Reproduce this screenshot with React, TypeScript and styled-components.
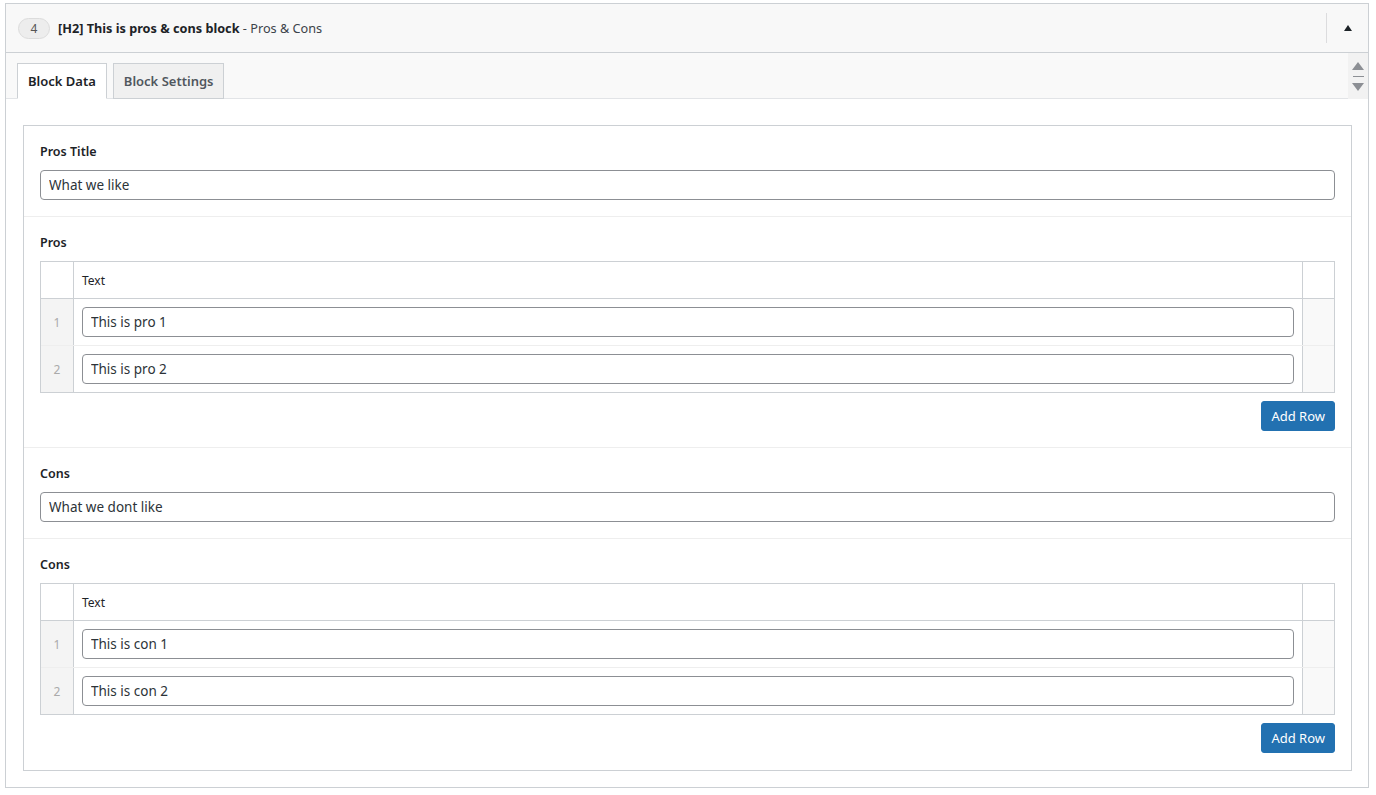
import React from "react";
import styled, { createGlobalStyle } from "styled-components";

const GlobalStyle = createGlobalStyle`
  html, body {
    margin: 0;
    padding: 0;
    background: #fff;
  }
  body {
    font-family: "Noto Sans", "Open Sans", sans-serif;
    font-size: 13px;
    color: #1d2327;
  }
  * {
    box-sizing: border-box;
  }
`;

type Row = { id: number; text: string };

const Page = styled.div`
  padding: 3px 7px 7px 5px;
`;

const Block = styled.div`
  border: 1px solid #ccd0d4;
  background: #fff;
`;

const BlockHeader = styled.div`
  display: flex;
  align-items: center;
  height: 49px;
  padding: 0 0 0 12px;
  background: #f8f8f8;
  border-bottom: 1px solid #ccd0d4;
`;

const Badge = styled.span`
  display: inline-flex;
  align-items: center;
  justify-content: center;
  width: 32px;
  height: 21px;
  border-radius: 11px;
  background: #ededed;
  border: 1px solid #dcdcdc;
  color: #555;
  font-size: 12px;
  margin-right: 8px;
`;

const Title = styled.div`
  flex: 1;
  font-size: 12.7px;
  color: #3c434a;

  & > b {
    font-weight: 700;
    color: #1d2327;
  }
`;

const ToggleBox = styled.div`
  display: flex;
  align-items: center;
  justify-content: center;
  width: 42px;
  height: 30px;
  border-left: 1px solid #dcdcde;
`;

const TabsBar = styled.div`
  display: flex;
  align-items: flex-end;
  height: 46px;
  background: #f9f9f9;
  border-bottom: 1px solid #e2e4e7;
`;

const Tabs = styled.div`
  flex: 1;
  display: flex;
  gap: 6px;
  padding-left: 11px;
  margin-bottom: -1px;
`;

const Tab = styled.div<{ $active?: boolean }>`
  height: 36px;
  padding: 0 10px;
  display: flex;
  align-items: center;
  font-size: 13px;
  font-weight: 600;
  color: ${(p) => (p.$active ? "#1d2327" : "#50575e")};
  background: ${(p) => (p.$active ? "#fff" : "#f0f0f0")};
  border: 1px solid #ccd0d4;
  border-bottom-color: ${(p) => (p.$active ? "#fff" : "#ccd0d4")};
`;

const Mover = styled.div`
  align-self: stretch;
  width: 20px;
  display: flex;
  flex-direction: column;
  align-items: center;
  justify-content: center;
  gap: 6px;
  background: #f2f2f2;
  margin-bottom: -1px;
`;

const MoverLine = styled.div`
  width: 11px;
  height: 1px;
  background: #8c8f94;
`;

const Body = styled.div`
  padding: 26px 16px 16px 17px;
`;

const Panel = styled.div`
  border: 1px solid #ccd0d4;
`;

const Field = styled.div<{ $last?: boolean }>`
  padding: 16px 16px ${(p) => (p.$last ? "17px" : "16px")};
  border-bottom: ${(p) => (p.$last ? "none" : "1px solid #eeeeee")};
`;

const Label = styled.div`
  font-size: 12.5px;
  font-weight: 600;
  color: #1d2327;
  line-height: 18px;
  padding-top: 1px;
  margin-bottom: 9px;
`;

const Input = styled.input`
  display: block;
  width: 100%;
  height: 30px;
  padding: 0 8px;
  border: 1px solid #8c8f94;
  border-radius: 4px;
  font-family: inherit;
  font-size: 13.5px;
  color: #2c3338;
  background: #fff;
  outline: none;
`;

const Table = styled.div`
  border: 1px solid #ccd0d4;
`;

const TableRow = styled.div<{ $head?: boolean }>`
  display: grid;
  grid-template-columns: 33px 1fr 32px;
  height: ${(p) => (p.$head ? "36px" : "47px")};
  border-top: ${(p) => (p.$head ? "none" : "1px solid #eeeeee")};

  &:nth-child(2) {
    border-top-color: #ccd0d4;
  }
`;

const NumCell = styled.div<{ $head?: boolean }>`
  display: flex;
  align-items: center;
  justify-content: center;
  background: ${(p) => (p.$head ? "#fff" : "#f4f4f4")};
  border-right: 1px solid #ccd0d4;
  color: #aaa;
  font-size: 12px;
`;

const MainCell = styled.div`
  display: flex;
  align-items: center;
  padding: 0 8px;
  font-size: 12px;
  color: #1d2327;
`;

const EndCell = styled.div<{ $head?: boolean }>`
  background: ${(p) => (p.$head ? "#fff" : "#f9f9f9")};
  border-left: 1px solid #ccd0d4;
`;

const Actions = styled.div`
  display: flex;
  justify-content: flex-end;
  padding-top: 8px;
`;

const Button = styled.button`
  height: 30px;
  padding: 0 9px;
  border: 1px solid #2271b1;
  border-radius: 3px;
  background: #2271b1;
  color: #fff;
  font-family: inherit;
  font-size: 13px;
  cursor: pointer;
`;

const Repeater = ({ rows }: { rows: Row[] }) => (
  <>
    <Table>
      <TableRow $head>
        <NumCell $head />
        <MainCell>Text</MainCell>
        <EndCell $head />
      </TableRow>
      {rows.map((r) => (
        <TableRow key={r.id}>
          <NumCell>{r.id}</NumCell>
          <MainCell>
            <Input defaultValue={r.text} />
          </MainCell>
          <EndCell />
        </TableRow>
      ))}
    </Table>
    <Actions>
      <Button>Add Row</Button>
    </Actions>
  </>
);

const pros: Row[] = [
  { id: 1, text: "This is pro 1" },
  { id: 2, text: "This is pro 2" },
];

const cons: Row[] = [
  { id: 1, text: "This is con 1" },
  { id: 2, text: "This is con 2" },
];

export default function App() {
  return (
    <Page>
      <GlobalStyle />
      <Block>
        <BlockHeader>
          <Badge>4</Badge>
          <Title>
            <b>[H2] This is pros &amp; cons block</b> - Pros &amp; Cons
          </Title>
          <ToggleBox>
            <svg width="8" height="6" viewBox="0 0 8 6">
              <path d="M4 0 L8 6 L0 6 Z" fill="#1d2327" />
            </svg>
          </ToggleBox>
        </BlockHeader>
        <TabsBar>
          <Tabs>
            <Tab $active>Block Data</Tab>
            <Tab>Block Settings</Tab>
          </Tabs>
          <Mover>
            <svg width="12" height="8" viewBox="0 0 12 8">
              <path d="M6 0 L12 8 L0 8 Z" fill="#8c8f94" />
            </svg>
            <MoverLine />
            <svg width="12" height="8" viewBox="0 0 12 8">
              <path d="M0 0 L12 0 L6 8 Z" fill="#8c8f94" />
            </svg>
          </Mover>
        </TabsBar>
        <Body>
          <Panel>
            <Field>
              <Label>Pros Title</Label>
              <Input defaultValue="What we like" />
            </Field>
            <Field>
              <Label>Pros</Label>
              <Repeater rows={pros} />
            </Field>
            <Field>
              <Label>Cons</Label>
              <Input defaultValue="What we dont like" />
            </Field>
            <Field $last>
              <Label>Cons</Label>
              <Repeater rows={cons} />
            </Field>
          </Panel>
        </Body>
      </Block>
    </Page>
  );
}
